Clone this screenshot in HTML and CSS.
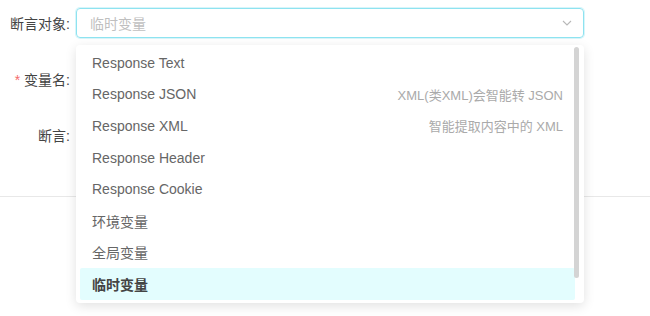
FILE: index.html
```html
<!DOCTYPE html>
<html lang="zh-CN">
<head>
    <meta charset="UTF-8">
    <title>断言</title>
    <link rel="stylesheet" href="styles.css">
</head>
<body>
    <div class="page">
        <div class="assert-form">
            <div class="form-row">
                <label class="form-label">断言对象:</label>
                <div class="select-wrap">
                    <div class="select-box">
                        <span class="placeholder">临时变量</span>
                        <svg class="arrow" width="12" height="12" viewBox="0 0 12 12"><path d="M2 4 L6 8 L10 4" fill="none" stroke="#b8b8b8" stroke-width="1.1"/></svg>
                    </div>
                    <div class="dropdown">
                        <ul class="options">
                            <li class="option"><span>Response Text</span></li>
                            <li class="option"><span>Response JSON</span><span class="hint">XML(类XML)会智能转 JSON</span></li>
                            <li class="option"><span>Response XML</span><span class="hint">智能提取内容中的 XML</span></li>
                            <li class="option"><span>Response Header</span></li>
                            <li class="option"><span>Response Cookie</span></li>
                            <li class="option"><span>环境变量</span></li>
                            <li class="option"><span>全局变量</span></li>
                            <li class="option selected"><span>临时变量</span></li>
                        </ul>
                        <div class="scrollbar"></div>
                    </div>
                </div>
            </div>
            <div class="form-row">
                <label class="form-label"><span class="required">*</span>变量名:</label>
            </div>
            <div class="form-row">
                <label class="form-label">断言:</label>
            </div>
        </div>
        <div class="divider"></div>
    </div>
</body>
</html>
```

FILE: styles.css
```css
html, body {
    height: 100%;
}
body {
    margin: 0;
    background: #fff;
    font-family: "Liberation Sans", "Noto Sans CJK SC", sans-serif;
    font-size: 14px;
    color: #333;
}
.page {
    min-height: 316px;
    padding-top: 8px;
    box-sizing: border-box;
}
.form-row {
    display: flex;
    align-items: center;
    height: 30px;
    margin-bottom: 26px;
}
.form-row:last-child {
    margin-bottom: 0;
}
.form-label {
    width: 70px;
    text-align: right;
    padding-right: 6px;
    color: #444;
    flex-shrink: 0;
}
.required {
    color: #f56c6c;
    margin-right: 4px;
}
.select-wrap {
    position: relative;
    width: 508px;
    z-index: 2;
}
.select-box {
    height: 28px;
    border: 1px solid #8ee3f0;
    border-radius: 4px;
    box-shadow: 0 0 0 1px rgba(142, 227, 240, 0.35);
    display: flex;
    align-items: center;
    justify-content: space-between;
    padding: 0 10px 0 13px;
}
.placeholder {
    color: #bfbfbf;
}
.dropdown {
    position: absolute;
    top: 37px;
    left: 0;
    width: 508px;
    height: 258px;
    background: #fff;
    border-radius: 4px;
    box-shadow: 0 3px 12px rgba(0, 0, 0, 0.12);
}
.options {
    list-style: none;
    margin: 0;
    padding: 2px 9px 0 4px;
}
.option {
    height: 31.6px;
    display: flex;
    align-items: center;
    justify-content: space-between;
    padding: 0 12px;
    color: #666;
    border-radius: 2px;
}
.hint {
    color: #aaa;
    font-size: 13px;
}
.option.selected {
    background: #e3fdfe;
    color: #444;
    font-weight: bold;
}
.scrollbar {
    position: absolute;
    top: 2px;
    right: 5px;
    width: 5px;
    height: 231px;
    background: #d4d4d4;
    border-radius: 3px;
}
.divider {
    margin-top: 46px;
    height: 1px;
    background: #e8e8e8;
}
```
